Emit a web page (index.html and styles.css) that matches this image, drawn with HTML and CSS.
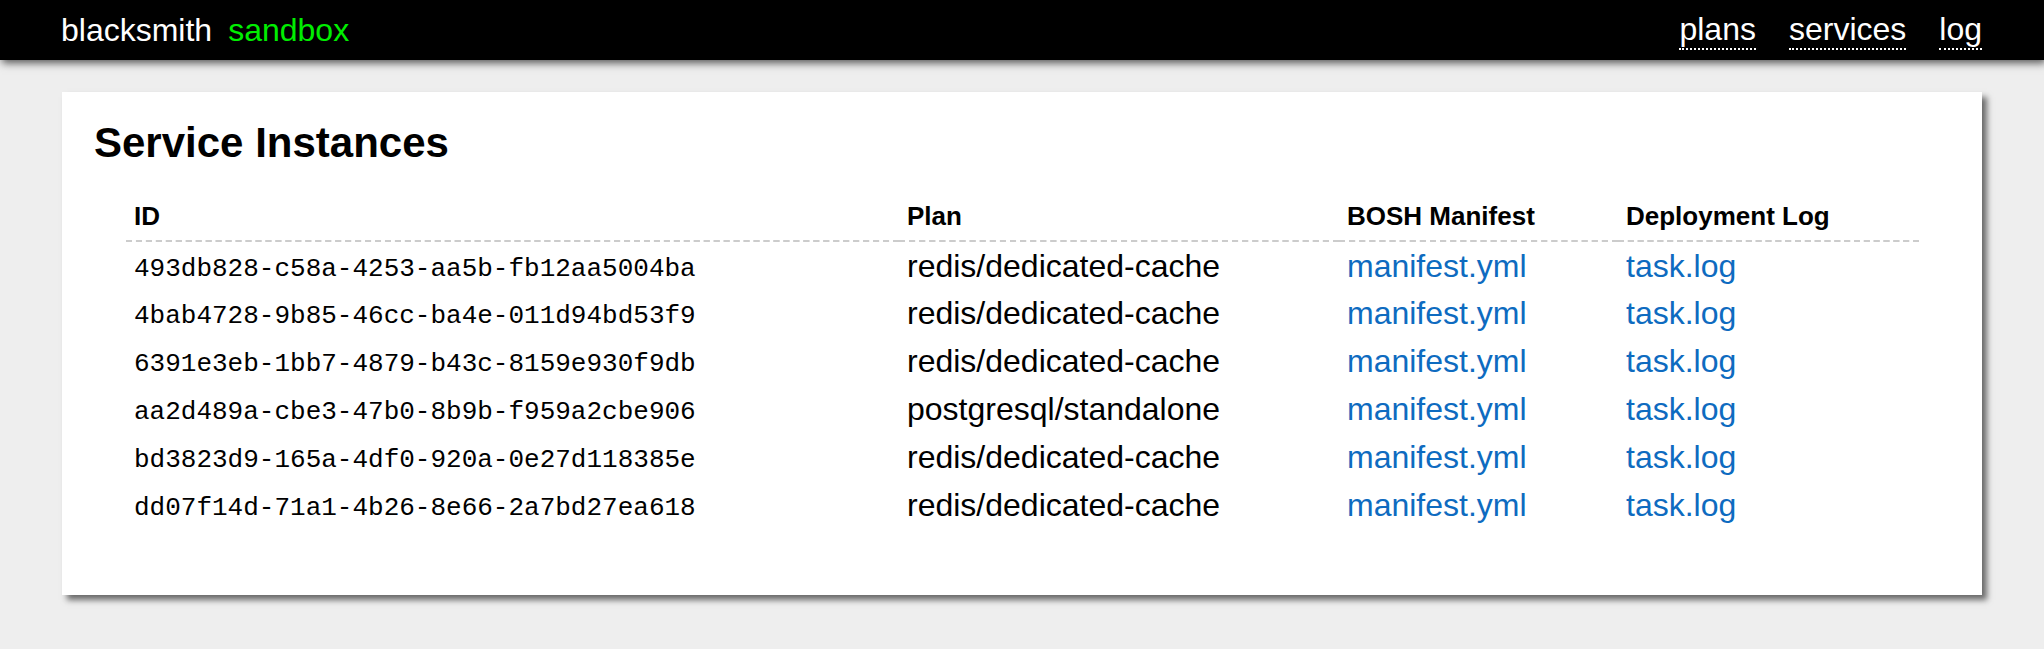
FILE: index.html
```html
<!DOCTYPE html>
<html>
<head>
<meta charset="utf-8">
<title>blacksmith sandbox</title>
<link rel="stylesheet" href="styles.css">
</head>
<body>
<header class="topbar">
  <div class="brand"><span class="brand-name">blacksmith</span><span class="brand-env">sandbox</span></div>
  <nav class="nav">
    <a href="#" class="nav-link">plans</a>
    <a href="#" class="nav-link">services</a>
    <a href="#" class="nav-link">log</a>
  </nav>
</header>
<main class="card">
  <h1 class="title">Service Instances</h1>
  <table class="instances">
    <thead>
      <tr>
        <th class="col-id">ID</th>
        <th class="col-plan">Plan</th>
        <th class="col-manifest">BOSH Manifest</th>
        <th class="col-log">Deployment Log</th>
      </tr>
    </thead>
    <tbody>
      <tr><td class="mono">493db828-c58a-4253-aa5b-fb12aa5004ba</td><td>redis/dedicated-cache</td><td><a href="#">manifest.yml</a></td><td><a href="#">task.log</a></td></tr>
      <tr><td class="mono">4bab4728-9b85-46cc-ba4e-011d94bd53f9</td><td>redis/dedicated-cache</td><td><a href="#">manifest.yml</a></td><td><a href="#">task.log</a></td></tr>
      <tr><td class="mono">6391e3eb-1bb7-4879-b43c-8159e930f9db</td><td>redis/dedicated-cache</td><td><a href="#">manifest.yml</a></td><td><a href="#">task.log</a></td></tr>
      <tr><td class="mono">aa2d489a-cbe3-47b0-8b9b-f959a2cbe906</td><td>postgresql/standalone</td><td><a href="#">manifest.yml</a></td><td><a href="#">task.log</a></td></tr>
      <tr><td class="mono">bd3823d9-165a-4df0-920a-0e27d118385e</td><td>redis/dedicated-cache</td><td><a href="#">manifest.yml</a></td><td><a href="#">task.log</a></td></tr>
      <tr><td class="mono">dd07f14d-71a1-4b26-8e66-2a7bd27ea618</td><td>redis/dedicated-cache</td><td><a href="#">manifest.yml</a></td><td><a href="#">task.log</a></td></tr>
    </tbody>
  </table>
</main>
</body>
</html>
```
FILE: styles.css
```css
html, body {
  margin: 0;
  padding: 0;
}
body {
  background: #eeeeee;
  font-family: "Liberation Sans", Arial, sans-serif;
  color: #000;
  padding-bottom: 40px;
}
.topbar {
  height: 60px;
  background: #000;
  color: #fff;
  display: flex;
  align-items: center;
  justify-content: space-between;
  padding: 0 62px 0 61px;
  box-shadow: 2px 3px 8px #555;
  position: relative;
  z-index: 1;
}
.brand {
  font-size: 32px;
  line-height: 36px;
}
.brand-env {
  color: #00ee00;
  margin-left: 16px;
}
.nav {
  display: flex;
  gap: 33px;
  font-size: 32px;
  line-height: 34px;
  margin-top: 2px;
}
.nav-link {
  color: #fff;
  text-decoration: none;
  border-bottom: 2px dotted #fff;
  padding-bottom: 2px;
}
.card {
  display: block;
  background: #fff;
  margin: 32px 62px 0;
  padding: 27px 32px 66px;
  box-shadow: 5px 5px 6px #6a6a6a;
}
.title {
  margin: 0 0 26px;
  font-size: 42px;
  line-height: 48px;
  font-weight: bold;
}
.instances {
  border-collapse: collapse;
  margin: 0 31px 0 32px;
  width: calc(100% - 63px);
  table-layout: fixed;
}
.instances th {
  text-align: left;
  font-size: 26px;
  line-height: 30px;
  font-weight: bold;
  padding: 8px 8px 9px;
  border-bottom: 2px dashed #cccccc;
}
.col-id { width: 757px; }
.col-plan { width: 424px; }
.col-manifest { width: 263px; }
.instances td {
  height: 48px;
  box-sizing: border-box;
  font-size: 32px;
  line-height: 37px;
  padding: 1px 8px 0;
  vertical-align: middle;
  white-space: nowrap;
}
.instances td.mono {
  font-family: "Liberation Mono", "Courier New", monospace;
  font-size: 26px;
  padding-top: 7px;
}
.instances a {
  color: #0e6bc0;
  text-decoration: none;
}
```
